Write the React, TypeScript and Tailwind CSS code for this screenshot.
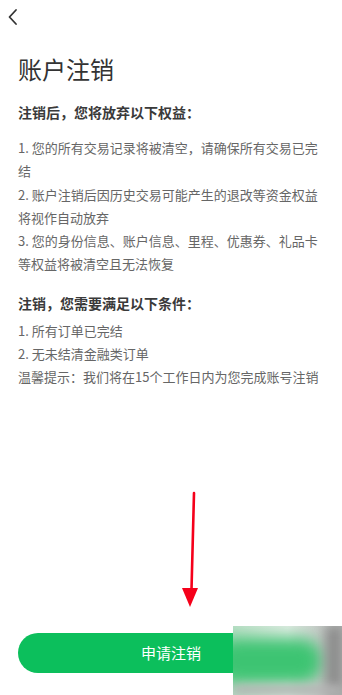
import React from "react";

const benefits = [
  "1. 您的所有交易记录将被清空，请确保所有交易已完结",
  "2. 账户注销后因历史交易可能产生的退改等资金权益将视作自动放弃",
  "3. 您的身份信息、账户信息、里程、优惠券、礼品卡等权益将被清空且无法恢复",
];

const conditions = ["1. 所有订单已完结", "2. 无未结清金融类订单"];

function BackIcon() {
  return (
    <svg width="12" height="18" viewBox="0 0 12 18" fill="none">
      <path d="M9 2 L2.5 9 L9 16" stroke="#333" strokeWidth="1.8" strokeLinecap="round" strokeLinejoin="round" />
    </svg>
  );
}

export default function App() {
  return (
    <div
      className="relative flex h-[695px] w-[342px] flex-col overflow-hidden bg-white"
      style={{ fontFamily: '"Noto Sans CJK SC", "Noto Sans", sans-serif' }}
    >
      {/* TOP BAR */}
      <div className="flex h-[34px] items-center pl-[7px]">
        <BackIcon />
      </div>

      <h1 className="mt-[19px] pl-[18px] text-[24px] leading-[32px] font-normal text-[#333]">账户注销</h1>

      {/* WHAT YOU LOSE */}
      <h2 className="mt-[16px] pl-[18px] text-[14px] leading-[22px] font-bold text-[#3a3a3a]">
        注销后，您将放弃以下权益：
      </h2>
      <div className="mt-[13px] pl-[18px] pr-[12px] text-[13px] leading-[23.3px] text-[#666]">
        {benefits.map((b) => (
          <p key={b}>{b}</p>
        ))}
      </div>

      {/* CONDITIONS */}
      <h2 className="mt-[16px] pl-[18px] text-[14px] leading-[22px] font-bold text-[#3a3a3a]">
        注销，您需要满足以下条件：
      </h2>
      <div className="mt-[5px] pl-[18px] pr-[10px] text-[13px] leading-[23.3px] text-[#666]">
        {conditions.map((c) => (
          <p key={c}>{c}</p>
        ))}
        <p>温馨提示：我们将在15个工作日内为您完成账号注销</p>
      </div>

      {/* BUTTON */}
      <div className="mt-auto px-[18px] pb-[22px]">
        <button className="flex h-[40px] w-full items-center justify-center rounded-full bg-[#0cbf5c] text-[15px] text-white">
          申请注销
        </button>
      </div>

      {/* RED ARROW ANNOTATION */}
      <svg className="absolute left-[176px] top-[490px]" width="30" height="120" viewBox="0 0 30 120">
        <path d="M18 3 L15.5 100" stroke="#f5001a" strokeWidth="2.6" strokeLinecap="round" />
        <path d="M6 98 L22 98 L14 117 Z" fill="#f5001a" />
      </svg>

      {/* BLURRED WATERMARK */}
      <div className="absolute left-[233px] top-[626px] h-[69px] w-[109px] overflow-hidden bg-[#e8ede9]">
        <div className="absolute inset-0 bg-gradient-to-r from-[#a8d9b8] via-[#dcebe0] to-[#9a9a9a] opacity-70" />
        <div className="absolute left-[-20px] top-[12px] h-[46px] w-[110px] rounded-full bg-[#3dc472] blur-[8px]" />
        <div className="absolute right-0 top-0 h-full w-[16px] bg-[#8a8a8a] blur-[6px]" />
        <div className="absolute bottom-0 left-0 h-[10px] w-full bg-[#b5b5b5] blur-[5px]" />
      </div>
    </div>
  );
}
